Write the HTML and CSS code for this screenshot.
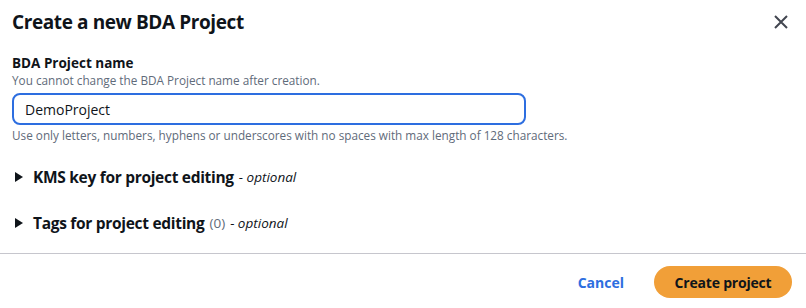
FILE: index.html
```html
<!DOCTYPE html>
<html>
<head>
    <meta charset="UTF-8">
    <title>Create a new BDA Project</title>
    <link rel="stylesheet" href="styles.css">
</head>
<body>
    <div class="modal">
        <div class="modal-header">
            <h2>Create a new BDA Project</h2>
            <button class="close" aria-label="Close">
                <svg width="16" height="16" viewBox="0 0 16 16">
                    <path d="M2 2 L14 14 M14 2 L2 14" stroke="#424650" stroke-width="2" fill="none"/>
                </svg>
            </button>
        </div>

        <div class="modal-body">
            <div class="field">
                <label for="project_name">BDA Project name</label>
                <div class="description">You cannot change the BDA Project name after creation.</div>
                <input type="text" id="project_name" value="DemoProject">
                <div class="hint">Use only letters, numbers, hyphens or underscores with no spaces with max length of 128 characters.</div>
            </div>

            <div class="expander">
                <span class="caret"></span>
                <span class="exp-title">KMS key for project editing</span>
                <span class="exp-optional">- optional</span>
            </div>

            <div class="expander">
                <span class="caret"></span>
                <span class="exp-title">Tags for project editing</span>
                <span class="exp-count">(0)</span>
                <span class="exp-optional">- optional</span>
            </div>
        </div>

        <div class="modal-footer">
            <button class="btn-link">Cancel</button>
            <button class="btn-primary">Create project</button>
        </div>
    </div>
</body>
</html>
```

FILE: styles.css
```css
body {
    font-family: "Open Sans", "Noto Sans", sans-serif;
    background-color: #fff;
    color: #0f141a;
    margin: 0;
    padding: 0;
}

.modal {
    width: 806px;
    height: 308px;
    box-sizing: border-box;
}

.modal-header {
    display: flex;
    justify-content: space-between;
    align-items: center;
    padding: 8px 17px 0 12px;
}

h2 {
    margin: 0;
    font-size: 19px;
    line-height: 28px;
    font-weight: 700;
    letter-spacing: -0.4px;
}

.close {
    border: none;
    background: none;
    padding: 0;
    width: 16px;
    height: 16px;
    cursor: pointer;
}

.modal-body {
    padding: 18px 12px 0 12px;
    height: 218px;
    box-sizing: border-box;
    border-bottom: 1px solid #c6c6cd;
}

.field label {
    display: block;
    font-size: 13.5px;
    line-height: 18px;
    font-weight: 700;
}

.description,
.hint {
    font-size: 11.75px;
    line-height: 16px;
    color: #5f6b7a;
}

.field input {
    display: block;
    width: 514px;
    height: 32px;
    margin: 5px 0 2px 0;
    padding: 0 11px;
    box-sizing: border-box;
    border: 2px solid #2d6ee0;
    border-radius: 8px;
    font-family: inherit;
    font-size: 14px;
    color: #0f141a;
    outline: none;
}

.expander {
    display: flex;
    align-items: center;
    margin-top: 24px;
    height: 20px;
    font-size: 15.5px;
    line-height: 20px;
}

.expander + .expander {
    margin-top: 26px;
}

.caret {
    width: 0;
    height: 0;
    margin: 0 10px 0 3px;
    border-top: 5px solid transparent;
    border-bottom: 5px solid transparent;
    border-left: 8px solid #0f141a;
}

.exp-title {
    font-weight: 700;
    letter-spacing: -0.3px;
}

.exp-count {
    margin-left: 5px;
    font-size: 13.5px;
    color: #5f6b7a;
}

.exp-optional {
    margin-left: 5px;
    font-size: 13.5px;
    font-style: italic;
}

.modal-footer {
    display: flex;
    justify-content: flex-end;
    align-items: center;
    gap: 30px;
    padding: 12px 14px 0 0;
}

.btn-link {
    border: none;
    background: none;
    font-family: inherit;
    font-size: 14px;
    font-weight: 700;
    color: #2d6ee0;
    padding: 0;
    cursor: pointer;
}

.btn-primary {
    border: none;
    background-color: #f19f38;
    color: #0f141a;
    font-family: inherit;
    font-size: 14px;
    font-weight: 700;
    letter-spacing: -0.2px;
    height: 32px;
    width: 138px;
    border-radius: 16px;
    cursor: pointer;
}
```
